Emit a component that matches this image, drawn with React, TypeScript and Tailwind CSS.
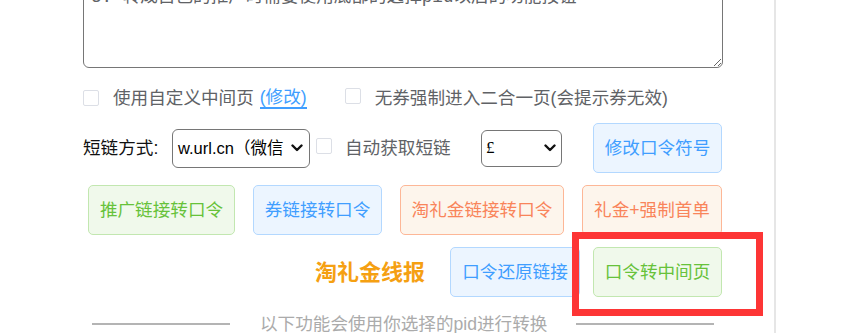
import { ReactNode } from "react";

const font = { fontFamily: '"Liberation Sans", "Noto Sans CJK SC", sans-serif' };

const Chevron = () => (
  <svg width="12" height="8" viewBox="0 0 12 8" className="shrink-0">
    <polyline points="1.5,1.5 6,6 10.5,1.5" fill="none" stroke="#111" strokeWidth="2.4" strokeLinecap="round" strokeLinejoin="round" />
  </svg>
);

const Box = () => (
  <span className="inline-block w-[16px] h-[16px] shrink-0 rounded-[2px] border border-[#dcdfe6] bg-white" />
);

type Tone = "green" | "blue" | "orange";

const tones: Record<Tone, string> = {
  green: "bg-[#f0f9eb] border-[#c2e7b0] text-[#67c23a]",
  blue: "bg-[#ecf5ff] border-[#b3d8ff] text-[#409eff]",
  orange: "bg-[#fdf5ec] border-[#fdb797] text-[#f9845a]",
};

const Btn = ({ tone, w, children }: { tone: Tone; w: string; children: ReactNode }) => (
  <div
    className={`${tones[tone]} ${w} h-[50px] shrink-0 border rounded-[5px] flex items-center justify-center text-[17.6px] whitespace-nowrap`}
  >
    {children}
  </div>
);

export default function App() {
  return (
    <div className="w-[866px] h-[333px] overflow-hidden bg-white flex" style={font}>
      <div className="w-[776px] h-full border-r-2 border-[#e6e6e6] pl-[83px]">
        <div className="w-[640px] flex flex-col">
          <textarea
            readOnly
            className="mt-[-44px] h-[112px] w-[640px] border border-[#767676] rounded-[6px] pl-[7px] pt-[4px] text-[17.6px] leading-[24px] text-[#606266] outline-none"
            style={{ fontFamily: '"Liberation Mono", "Noto Sans CJK SC", monospace' }}
            value={"2. 生成的口令默认使用当前账号的推广位\n3. 转成自己的推广时需要使用底部的选择pid以后的功能按钮"}
          />

          <div className="mt-[18px] h-[24px] flex items-center text-[17.6px] text-[#606266]">
            <Box />
            <span className="ml-[14px] whitespace-nowrap">使用自定义中间页</span>
            <span className="ml-[6px] text-[#409eff] border-b-2 border-[#409eff] leading-[20px] whitespace-nowrap">(修改)</span>
            <span className="ml-[38px]"><Box /></span>
            <span className="ml-[14px] whitespace-nowrap">无券强制进入二合一页(会提示券无效)</span>
          </div>

          <div className="mt-[13px] h-[50px] flex items-center text-[17.6px]">
            <span className="w-[89px] shrink-0 text-[#111] whitespace-nowrap">短链方式:</span>
            <div className="w-[138px] h-[39px] shrink-0 border border-[#767676] rounded-[6px] flex items-center justify-between pl-[5px] pr-[6px]">
              <span className="whitespace-nowrap text-[16.5px] text-black">w.url.cn（微信</span>
              <Chevron />
            </div>
            <span className="ml-[6px]"><Box /></span>
            <span className="ml-[13px] w-[136px] shrink-0 text-[#606266] whitespace-nowrap">自动获取短链</span>
            <div className="w-[81px] h-[37px] shrink-0 border border-[#767676] rounded-[6px] flex items-center pl-[4px] pr-[5px] justify-between">
              <span className="text-[17px] text-black" style={{ fontFamily: '"Liberation Serif", serif' }}>£</span>
              <Chevron />
            </div>
            <div className="ml-[31px]">
              <Btn tone="blue" w="w-[129px]">修改口令符号</Btn>
            </div>
          </div>

          <div className="mt-[12px] ml-[5px] flex gap-[18px]">
            <Btn tone="green" w="w-[147px]">推广链接转口令</Btn>
            <Btn tone="blue" w="w-[129px]">券链接转口令</Btn>
            <Btn tone="orange" w="w-[164px]">淘礼金链接转口令</Btn>
            <Btn tone="orange" w="w-[140px]">礼金+强制首单</Btn>
          </div>

          <div className="mt-[12px] pr-[1px] flex items-center justify-end">
            <span className="text-[22px] font-bold text-[#f5a012] whitespace-nowrap">淘礼金线报</span>
            <div className="ml-[25px]">
              <Btn tone="blue" w="w-[130px]">口令还原链接</Btn>
            </div>
            <div className="ml-[13px] relative">
              <Btn tone="green" w="w-[129px]">口令转中间页</Btn>
              <div className="absolute left-[-21px] top-[-15px] w-[191px] h-[84px] border-[7px] border-[#fd3535]" />
            </div>
          </div>

          <div className="mt-[14px] flex items-center text-[17.6px] text-[#ababab]">
            <span className="ml-[9px] w-[138px] h-[2px] bg-[#b4b4b4]" />
            <span className="ml-[30px] whitespace-nowrap">以下功能会使用你选择的pid进行转换</span>
            <span className="ml-[29px] w-[138px] h-[2px] bg-[#b4b4b4]" />
          </div>
        </div>
      </div>
    </div>
  );
}
